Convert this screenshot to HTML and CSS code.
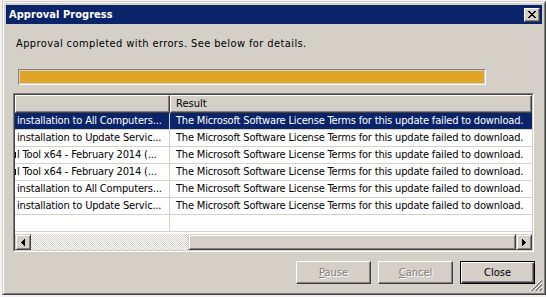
FILE: index.html
```html
<!DOCTYPE html>
<html lang="en">
<head>
  <meta charset="UTF-8" />
  <title>Approval Progress</title>
  <link rel="stylesheet" href="styles.css">
</head>
<body>
  <div class="window">
    <div class="frame">
      <div class="titlebar">
        <span class="title">Approval Progress</span>
        <button class="close-btn" aria-label="Close">
          <svg width="8" height="7" viewBox="0 0 8 7" shape-rendering="crispEdges">
            <path fill="#000" d="M0 0h2v1h-2z M6 0h2v1h-2z M1 1h2v1h-2z M5 1h2v1h-2z M2 2h4v1h-4z M3 3h2v1h-2z M2 4h4v1h-4z M1 5h2v1h-2z M5 5h2v1h-2z M0 6h2v1h-2z M6 6h2v1h-2z"/>
          </svg>
        </button>
      </div>
      <div class="client">
        <p class="message">Approval completed with errors. See below for details.</p>
        <div class="progress"><div class="progress-fill"></div></div>

        <div class="listview">
          <div class="listview-inner">
            <div class="list-header">
              <div class="col-head col-update"></div>
              <div class="col-head col-result">Result</div>
            </div>
            <div class="list-rows">
              <div class="row selected">
                <div class="cell col-update">installation to All Computers...</div>
                <div class="cell col-result">The Microsoft Software License Terms for this update failed to download.</div>
              </div>
              <div class="row">
                <div class="cell col-update">installation to Update Servic...</div>
                <div class="cell col-result">The Microsoft Software License Terms for this update failed to download.</div>
              </div>
              <div class="row">
                <div class="cell col-update scrolled">l Tool x64 - February 2014 (...</div>
                <div class="cell col-result">The Microsoft Software License Terms for this update failed to download.</div>
              </div>
              <div class="row">
                <div class="cell col-update scrolled">l Tool x64 - February 2014 (...</div>
                <div class="cell col-result">The Microsoft Software License Terms for this update failed to download.</div>
              </div>
              <div class="row">
                <div class="cell col-update">installation to All Computers...</div>
                <div class="cell col-result">The Microsoft Software License Terms for this update failed to download.</div>
              </div>
              <div class="row">
                <div class="cell col-update">installation to Update Servic...</div>
                <div class="cell col-result">The Microsoft Software License Terms for this update failed to download.</div>
              </div>
              <div class="row">
                <div class="cell col-update"></div>
                <div class="cell col-result"></div>
              </div>
            </div>
            <div class="hscroll">
              <div class="scroll-btn">
                <svg width="4" height="7" viewBox="0 0 4 7" shape-rendering="crispEdges">
                  <path fill="#000" d="M3 0h1v7h-1z M2 1h1v5h-1z M1 2h1v3h-1z M0 3h1v1h-1z"/>
                </svg>
              </div>
              <div class="scroll-track"></div>
              <div class="scroll-thumb"></div>
              <div class="scroll-btn">
                <svg width="4" height="7" viewBox="0 0 4 7" shape-rendering="crispEdges">
                  <path fill="#000" d="M0 0h1v7h-1z M1 1h1v5h-1z M2 2h1v3h-1z M3 3h1v1h-1z"/>
                </svg>
              </div>
            </div>
          </div>
        </div>

        <div class="buttons">
          <button class="btn" disabled><u>P</u>ause</button>
          <button class="btn" disabled><u>C</u>ancel</button>
          <button class="btn btn-default">Close</button>
        </div>

        <svg class="grip" width="12" height="12" viewBox="0 0 12 12" shape-rendering="crispEdges">
          <path stroke="#fff" d="M0 12L12 0 M4 12L12 4 M8 12L12 8"/>
          <path stroke="#808080" d="M1 12L12 1 M2 12L12 2 M5 12L12 5 M6 12L12 6 M9 12L12 9 M10 12L12 10"/>
        </svg>
      </div>
    </div>
  </div>
</body>
</html>
```

FILE: styles.css
```css
* { box-sizing: border-box; }
body {
  margin: 0;
  background: #f2f2f2;
  font-family: "DejaVu Sans Condensed", "DejaVu Sans", sans-serif;
  font-size: 11px;
  color: #000;
}
.window {
  margin: 1px 0 0 2px;
  width: 544px;
  height: 294px;
  border: 1px solid;
  border-color: #d4d0c8 #404040 #404040 #d4d0c8;
  background: #d4d0c8;
}
.frame {
  height: 100%;
  border: 1px solid;
  border-color: #fff #808080 #808080 #fff;
  padding: 2px;
  display: flex;
  flex-direction: column;
}
.titlebar {
  height: 19px;
  flex: none;
  background: #0a246a;
  color: #fff;
  display: flex;
  align-items: center;
  justify-content: space-between;
  padding: 0 2px 0 3px;
}
.title { font-weight: bold; letter-spacing: 0.05px; }
.close-btn {
  width: 16px;
  height: 14px;
  padding: 0;
  background: #d4d0c8;
  border: 1px solid;
  border-color: #fff #404040 #404040 #fff;
  box-shadow: inset -1px -1px #808080;
  display: flex;
  align-items: center;
  justify-content: center;
}
.client {
  flex: 1;
  position: relative;
  display: flex;
  flex-direction: column;
}
.message {
  margin: 13px 0 0 10px;
  line-height: 13px;
  letter-spacing: 0.4px;
}
.progress {
  margin: 19px 0 0 12px;
  width: 468px;
  height: 16px;
  padding: 1px;
  border: 1px solid;
  border-color: #808080 #fff #fff #808080;
}
.progress-fill { height: 100%; background: #e0a526; }

.listview {
  margin: 8px 0 0 7px;
  width: 521px;
  height: 159px;
  border: 1px solid;
  border-color: #808080 #fff #fff #808080;
}
.listview-inner {
  height: 100%;
  border: 1px solid;
  border-color: #404040 #d4d0c8 #d4d0c8 #404040;
  background: #fff;
  display: flex;
  flex-direction: column;
}
.list-header { display: flex; height: 18px; flex: none; }
.col-head {
  background: #d4d0c8;
  border: 1px solid;
  border-color: #fff #404040 #404040 #fff;
  box-shadow: inset -1px -1px #808080;
  line-height: 16px;
  padding-left: 5px;
}
.col-update { width: 155px; flex: none; }
.col-head.col-result { flex: 1; }
.list-rows { flex: 1; overflow: hidden; }
.row {
  display: flex;
  height: 17px;
  border-bottom: 1px solid #d4d0c8;
  line-height: 16px;
  white-space: nowrap;
  letter-spacing: -0.17px;
}
.row.selected { background: #0a246a; color: #fff; }
.cell { overflow: hidden; }
.cell.col-update { border-right: 1px solid #d4d0c8; padding-left: 2px; }
.cell.col-result { flex: 1; padding-left: 6px; }
.cell.scrolled { padding-left: 0; }
.cell.scrolled::before {
  content: "";
  display: inline-block;
  width: 1px;
  height: 6px;
  margin-right: 1px;
  background: #000;
}

.hscroll { display: flex; height: 16px; flex: none; }
.scroll-btn, .scroll-thumb {
  background: #d4d0c8;
  border: 1px solid;
  border-color: #d4d0c8 #404040 #404040 #d4d0c8;
  box-shadow: inset 1px 1px #fff, inset -1px -1px #808080;
}
.scroll-btn {
  width: 16px;
  flex: none;
  display: flex;
  align-items: center;
  justify-content: center;
}
.scroll-track {
  width: 157px;
  flex: none;
  background: repeating-conic-gradient(#d4d0c8 0 25%, #fff 0 50%) 0 0 / 2px 2px;
}
.scroll-thumb { flex: 1; }

.buttons {
  display: flex;
  justify-content: flex-end;
  gap: 7px;
  margin: 9px 7px 0 0;
}
.btn {
  width: 75px;
  height: 23px;
  padding: 0;
  font: inherit;
  color: #000;
  background: #d4d0c8;
  border: 1px solid;
  border-color: #fff #404040 #404040 #fff;
  box-shadow: inset -1px -1px #808080;
}
.btn:disabled { color: #808080; text-shadow: 1px 1px 0 #fff; }
.btn-default {
  border-color: #000;
  box-shadow: inset 1px 1px #fff, inset -1px -1px #404040, inset -2px -2px #808080;
}
.grip { position: absolute; right: 0; bottom: 0; }
```
